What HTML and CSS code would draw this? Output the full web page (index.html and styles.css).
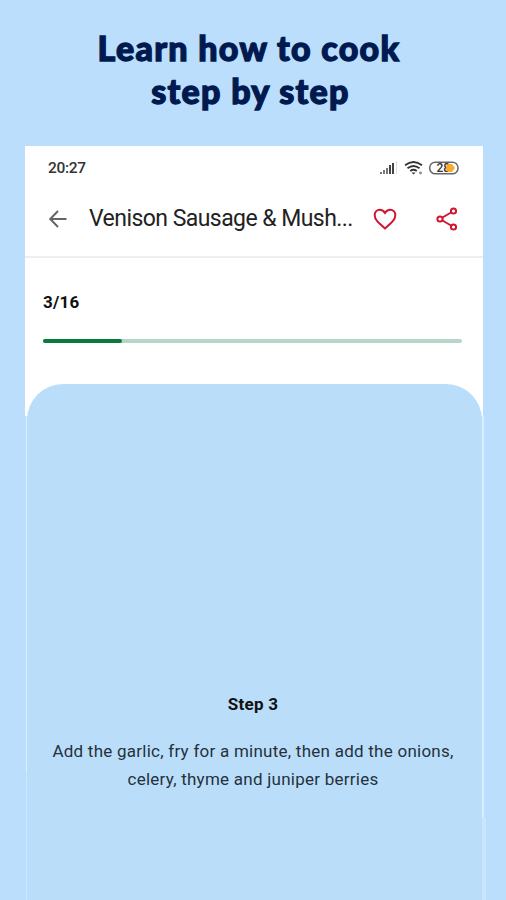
FILE: index.html
```html
<!DOCTYPE html>
<html lang="en">
<head>
<meta charset="utf-8">
<title>Learn how to cook</title>
<link rel="stylesheet" href="styles.css">
</head>
<body>
<h1 class="headline"><span class="line-one">Learn how to cook</span><br><span class="line-two">step by step</span></h1>
<main class="phone">
  <div class="status">
    <span class="time">20:27</span>
    <svg class="indicators" width="82" height="18" viewBox="0 0 82 18">
      <g fill="#444"><path d="M1 13h2v2H1zM4 11h2v4H4zM7 9h2v6H7z" fill="#777"/><path d="M10 6h2v9h-2zM13 4h2v11h-2z"/><path d="M17 2h1v13h-1z" fill="#ddd"/></g>
      <g fill="none" stroke="#333" stroke-width="1.8"><path d="M26 6.3q8.500-6.600 17 0M28.500 9.300q6-4.700 12 0M31.200 12q3.300-2.500 6.600 0"/></g>
      <path d="M32.500 13.500h4L34.500 15.500z" fill="#333"/><circle cx="41.500" cy="14" r="1.400" fill="#888"/>
      <rect x="50.700" y="3.200" width="28.300" height="11.600" rx="5.600" fill="#fff" stroke="#666" stroke-width="1.500"/>
      <text class="charge" x="57.500" y="13">28</text>
      <path d="M69 5h4l3 4-3 4h-4l-2-2V7z" fill="#f9ac2b"/>
    </svg>
  </div>
  <header class="bar">
    <svg class="back" width="20" height="20" viewBox="0 0 20 20"><path d="M18.500 10H2.500M10 2L2.200 10l7.800 8"/></svg>
    <span class="title">Venison Sausage &amp; Mush...</span>
    <svg class="heart" width="24" height="24" viewBox="0 0 24 24"><path d="M12 21.500C5 15.500 1.700 12.500 1.700 8.200 1.700 4.800 4 2.700 6.800 2.700c2.200 0 4 1.200 5.200 3.200 1.200-2 3-3.200 5.200-3.200 2.800 0 5.100 2.100 5.100 5.500 0 4.300-3.300 7.300-10.300 13.300z"/></svg>
    <svg class="share" width="24" height="24" viewBox="0 0 24 24"><path d="M7.500 10.500l8.500-5M7.500 13.500l8.500 5"/><circle cx="5" cy="12" r="2.600"/><circle cx="18.500" cy="4" r="2.600"/><circle cx="18.500" cy="20" r="2.600"/></svg>
  </header>
  <section class="progress">
    <div class="count">3/16</div>
    <div class="track"><div class="fill"></div></div>
  </section>
  <section class="sheet">
    <h2 class="step">Step 3</h2>
    <p class="text">Add the garlic, fry for a minute, then add the onions,<br>celery, thyme and juniper berries</p>
  </section>
</main>
</body>
</html>
```
FILE: styles.css
```css
* { box-sizing: border-box; }
body {
  margin: 0;
  height: 900px;
  overflow: hidden;
  display: flex;
  flex-direction: column;
  background: #bbdefd;
  font-family: Roboto, "Liberation Sans", sans-serif;
  color: #111;
}
.headline {
  margin: 0;
  height: 146px;
  padding: 26px 8px 0 0;
  flex: none;
  text-align: center;
  font: 900 34px/43px Lato, "Open Sans", sans-serif;
  letter-spacing: 1.3px;
  color: #001a50;
  white-space: nowrap;
  -webkit-text-stroke: 1.3px #001a50;
}
.line-two { margin-left: 3px; }
.phone {
  width: 461px;
  height: 754px;
  margin-left: 25px;
  flex: none;
  display: flex;
  flex-direction: column;
  background:
    linear-gradient(#fff, #fff) 0 0 / 458px 270px no-repeat,
    linear-gradient(#daeefe, #daeefe) 1px 270px / 1.5px 357px no-repeat,
    linear-gradient(#c9e6fe, #c9e6fe) 1px 627px / 2px 127px no-repeat,
    linear-gradient(#daeefe, #daeefe) 457px 270px / 2px 402px no-repeat,
    linear-gradient(#c9e6fe, #c9e6fe) 457px 672px / 4px 82px no-repeat;
}
.status {
  width: 458px;
  height: 38px;
  padding: 6px 22px 0 23px;
  display: flex;
  align-items: center;
  justify-content: space-between;
}
.time { font-size: 15.5px; font-weight: 500; letter-spacing: -0.3px; color: #333; }
.charge { font: 500 12px Roboto, sans-serif; fill: #333; }
.bar {
  width: 458px;
  height: 74px;
  padding: 0 0 3px 23px;
  display: flex;
  align-items: center;
  border-bottom: 2px solid #eee;
}
.bar svg { flex: none; fill: none; stroke-width: 2; }
.back { stroke: #666; }
.title {
  flex: none;
  width: 305px;
  padding-left: 21px;
  font-size: 23px;
  letter-spacing: -0.55px;
  white-space: nowrap;
  color: #222;
}
.heart, .share { stroke: #cf1732; }
.share { margin-left: 38px; }
.progress { width: 458px; height: 126px; padding: 32px 21px 0 18px; }
.count { font-size: 17px; line-height: 24px; font-weight: 700; letter-spacing: 0.2px; }
.track {
  height: 4px;
  margin-top: 25px;
  border-radius: 2px;
  background: #b4d7c7;
}
.fill { width: 79px; height: 4px; border-radius: 2px; background: #087a3c; }
.sheet {
  width: 455px;
  flex: 1;
  margin-left: 2px;
  padding: 308px 3px 0 0;
  border-radius: 36px 36px 0 0;
  background: #badefa;
  text-align: center;
}
.step { margin: 0; font-size: 17px; line-height: 24px; font-weight: 700; letter-spacing: 0.3px; }
.text {
  margin: 21px 0 0;
  font-size: 17px;
  line-height: 28px;
  letter-spacing: 0.25px;
  white-space: nowrap;
  color: #25313c;
}
```
